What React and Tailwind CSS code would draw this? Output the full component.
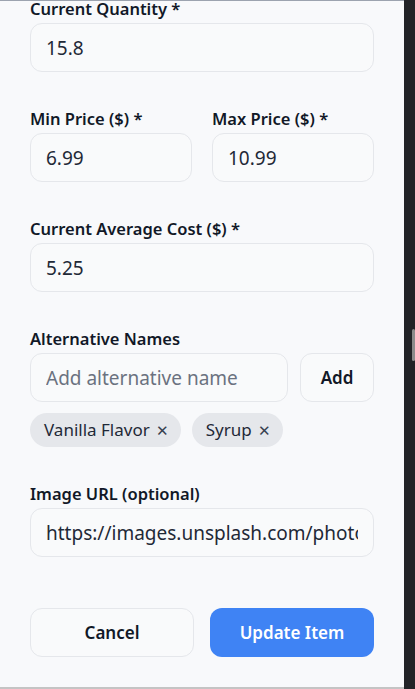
import React from 'react';

const font = { fontFamily: '"Noto Sans", "Open Sans", sans-serif' };

const Label = ({ children, className = '' }) => (
    <label className={`block text-[16.5px] font-semibold leading-6 text-[#111827] mb-[2px] ${className}`}>
        {children}
    </label>
);

const Field = ({ value, placeholder, className = '' }) => (
    <input
        readOnly
        defaultValue={value}
        placeholder={placeholder}
        className={`block w-full h-[49px] px-[15px] rounded-xl border border-[#e5e7eb] bg-[#f9fafb] text-[19px] text-[#1f2937] placeholder:text-[#6b7280] outline-none ${className}`}
    />
);

const Chip = ({ label }) => (
    <span className="inline-flex items-center h-[34px] pl-[14px] pr-[12px] rounded-full bg-[#e5e7eb] text-[17px] text-[#1f2937]">
        {label}
        <span className="ml-[6px] text-[15px] text-[#374151]">✕</span>
    </span>
);

export default function App() {
    return (
        <div className="w-[415px] h-[689px] flex overflow-hidden bg-[#222327]" style={font}>

            {/* form panel */}
            <div className="w-[404px] h-full bg-[#f8f9fb] border-t border-[#9ca3af] border-b-2 border-b-[#c4c4c4] overflow-hidden">
                <div className="px-[30px] -mt-[4px]">

                    <Label>Current Quantity *</Label>
                    <Field value="15.8" />

                    <div className="grid grid-cols-2 gap-5 mt-[35px]">
                        <div>
                            <Label>Min Price ($) *</Label>
                            <Field value="6.99" />
                        </div>
                        <div>
                            <Label>Max Price ($) *</Label>
                            <Field value="10.99" />
                        </div>
                    </div>

                    <div className="mt-[35px]">
                        <Label>Current Average Cost ($) *</Label>
                        <Field value="5.25" />
                    </div>

                    <div className="mt-[35px]">
                        <Label>Alternative Names</Label>
                        <div className="flex gap-3">
                            <Field placeholder="Add alternative name" className="flex-1 w-auto min-w-0" />
                            <button className="w-[74px] h-[49px] shrink-0 rounded-xl border border-[#e5e7eb] bg-[#f9fafb] text-[17px] font-semibold text-[#111827]">
                                Add
                            </button>
                        </div>
                        <div className="flex gap-[11px] mt-[11px]">
                            <Chip label="Vanilla Flavor" />
                            <Chip label="Syrup" />
                        </div>
                    </div>

                    <div className="mt-[35px]">
                        <Label>Image URL (optional)</Label>
                        <Field value="https://images.unsplash.com/photo-1558642452-9d2a7deb7f62" />
                    </div>

                    <div className="grid grid-cols-2 gap-4 mt-[51px]">
                        <button className="h-[49px] rounded-xl border border-[#e5e7eb] bg-[#f9fafb] text-[17px] font-semibold text-[#111827]">
                            Cancel
                        </button>
                        <button className="h-[49px] rounded-xl bg-[#3f83f4] text-[17px] font-semibold text-white">
                            Update Item
                        </button>
                    </div>
                </div>
            </div>

            {/* scrollbar gutter */}
            <div className="w-[11px] h-full flex justify-end pt-[329px]">
                <div className="w-[3px] h-[32px] bg-[#8b8b8b] rounded-sm" />
            </div>
        </div>
    );
}
